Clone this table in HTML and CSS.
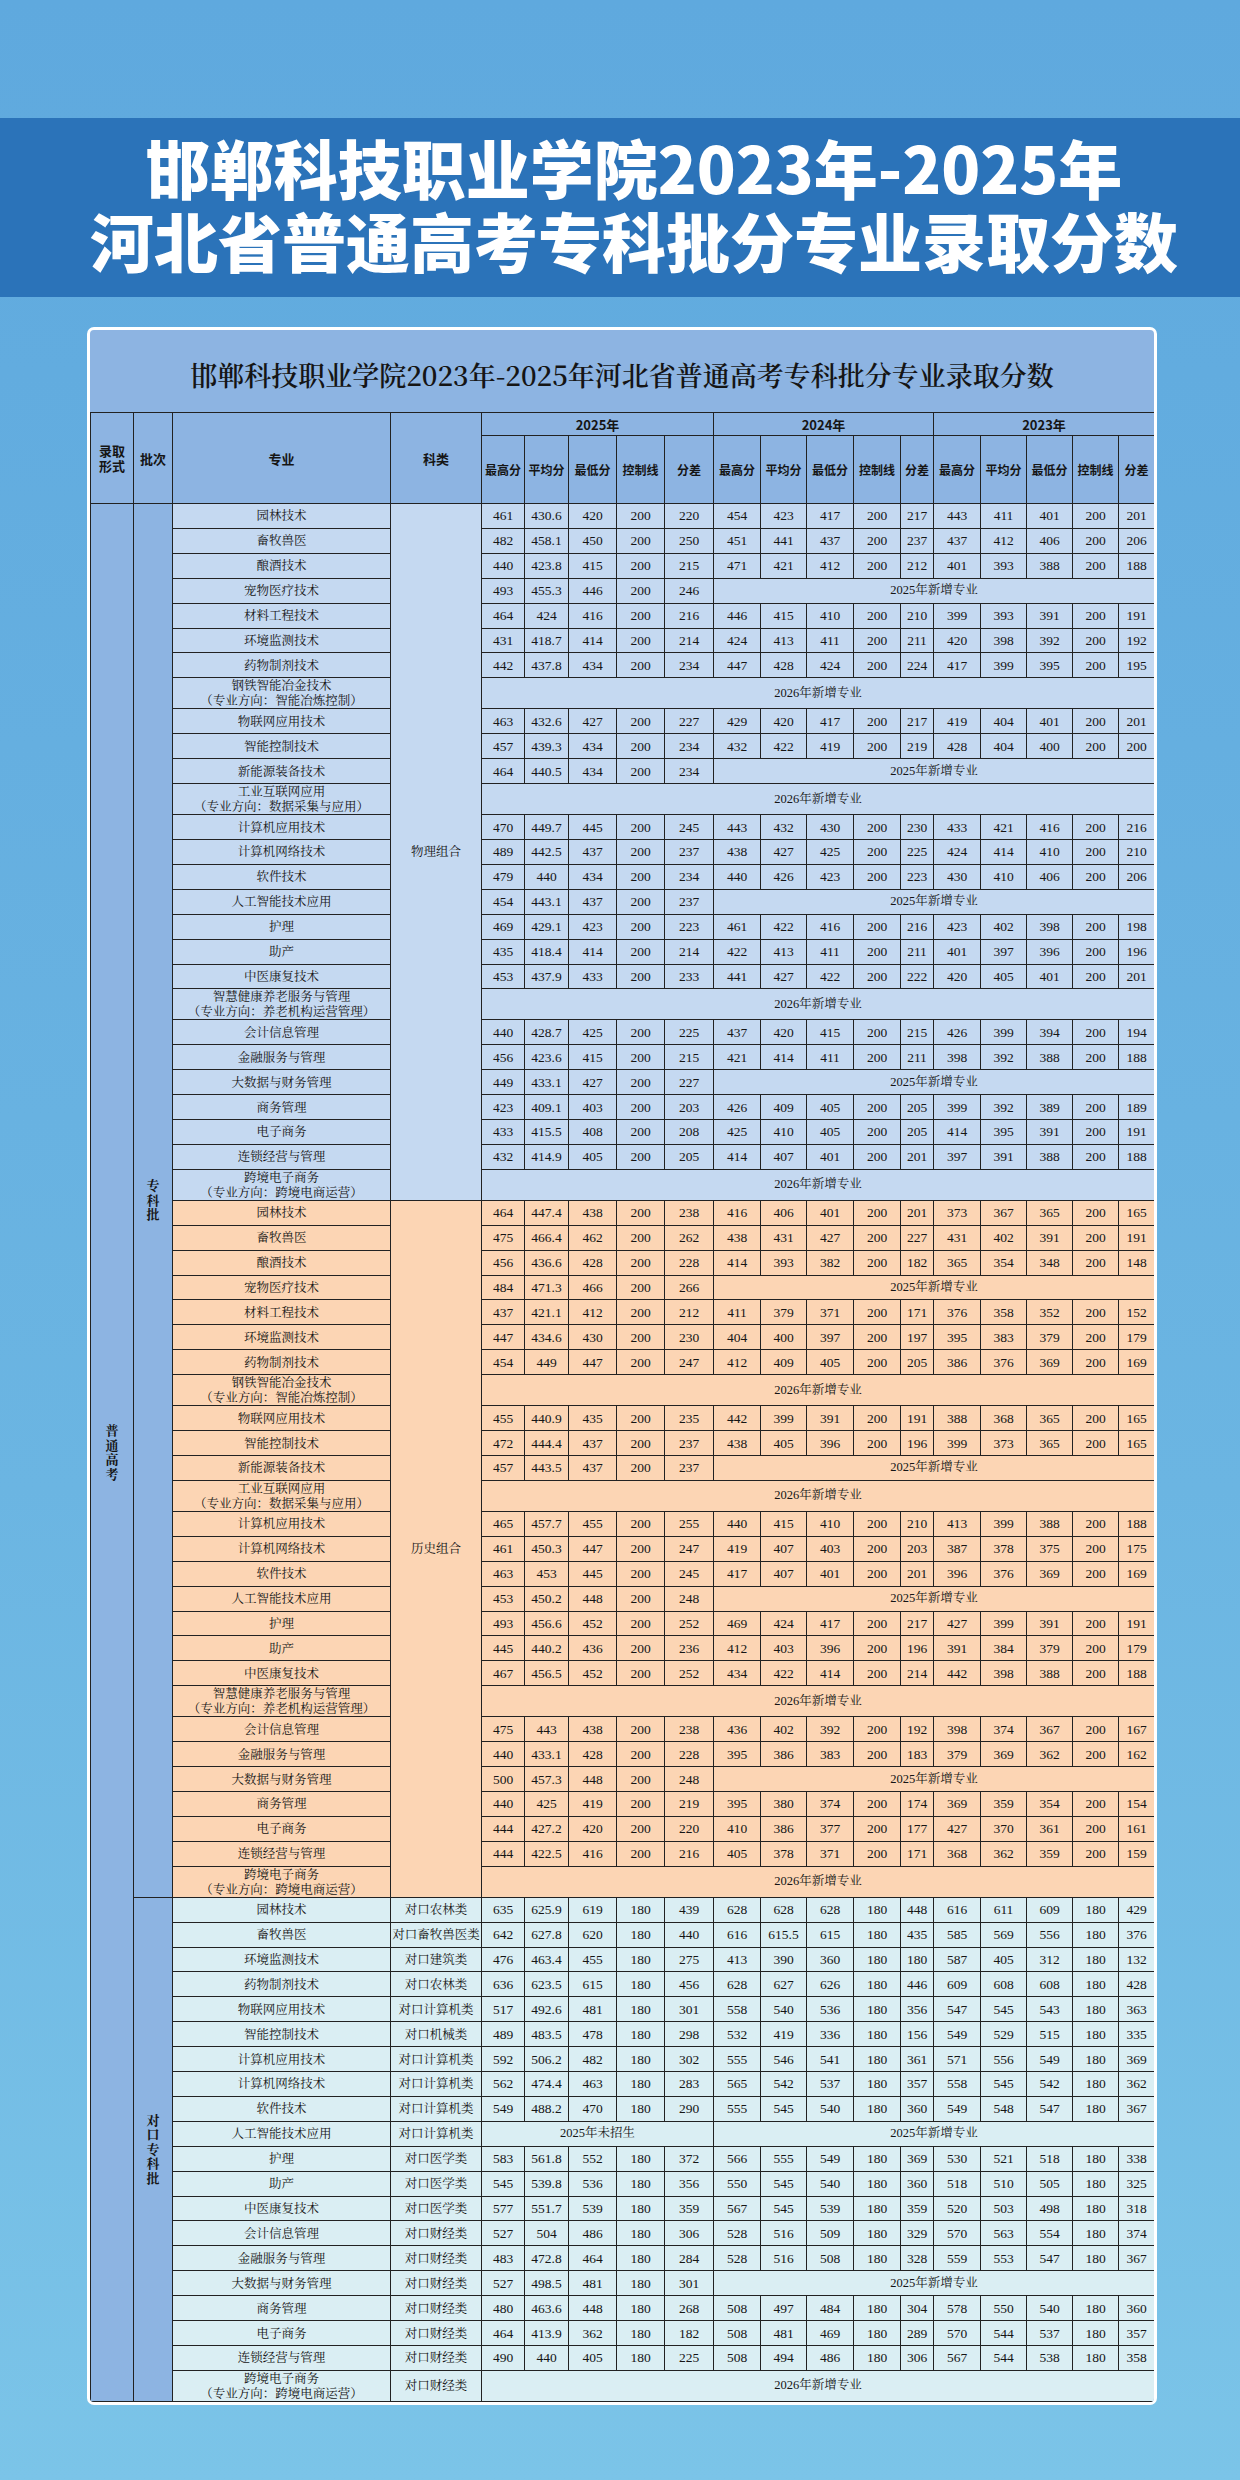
FILE: index.html
```html
<!DOCTYPE html>
<html lang="zh-CN">
<head>
<meta charset="utf-8">
<title>邯郸科技职业学院2023年-2025年河北省普通高考专科批分专业录取分数</title>
<link rel="stylesheet" href="styles.css">
</head>
<body>
<header class="banner">
  <h1><span class="line">邯郸科技职业学院2023年-2025年</span><span class="line">河北省普通高考专科批分专业录取分数</span></h1>
</header>
<main class="card">
  <div class="card-title">邯郸科技职业学院2023年-2025年河北省普通高考专科批分专业录取分数</div>
  <table class="scores">
    <colgroup>
      <col style="width:43px"><col style="width:39px"><col style="width:218px"><col style="width:91px">
      <col style="width:43px"><col style="width:44px"><col style="width:48px"><col style="width:48px"><col style="width:49px">
      <col style="width:47px"><col style="width:46px"><col style="width:47px"><col style="width:47px"><col style="width:33px">
      <col style="width:47px"><col style="width:46px"><col style="width:46px"><col style="width:46px"><col style="width:36px">
    </colgroup>
    <thead>
      <tr class="yr">
        <th rowspan="2">录取<br>形式</th>
        <th rowspan="2">批次</th>
        <th rowspan="2">专业</th>
        <th rowspan="2">科类</th>
        <th colspan="5">2025年</th>
        <th colspan="5">2024年</th>
        <th colspan="5">2023年</th>
      </tr>
      <tr class="sub">
        <th>最高分</th><th>平均分</th><th>最低分</th><th>控制线</th><th>分差</th>
        <th>最高分</th><th>平均分</th><th>最低分</th><th>控制线</th><th>分差</th>
        <th>最高分</th><th>平均分</th><th>最低分</th><th>控制线</th><th>分差</th>
      </tr>
    </thead>
    <tbody>
      <tr class="p">
        <td class="side" rowspan="74"><span class="vert">普通高考</span></td>
        <td class="side" rowspan="54"><span class="vert">专科批</span></td>
        <td class="major">园林技术</td>
        <td class="cat" rowspan="27">物理组合</td>
        <td>461</td><td>430.6</td><td>420</td><td>200</td><td>220</td><td>454</td><td>423</td><td>417</td><td>200</td><td>217</td><td>443</td><td>411</td><td>401</td><td>200</td><td>201</td>
      </tr>
      <tr class="p"><td class="major">畜牧兽医</td><td>482</td><td>458.1</td><td>450</td><td>200</td><td>250</td><td>451</td><td>441</td><td>437</td><td>200</td><td>237</td><td>437</td><td>412</td><td>406</td><td>200</td><td>206</td></tr>
      <tr class="p"><td class="major">酿酒技术</td><td>440</td><td>423.8</td><td>415</td><td>200</td><td>215</td><td>471</td><td>421</td><td>412</td><td>200</td><td>212</td><td>401</td><td>393</td><td>388</td><td>200</td><td>188</td></tr>
      <tr class="p"><td class="major">宠物医疗技术</td><td>493</td><td>455.3</td><td>446</td><td>200</td><td>246</td><td class="note" colspan="10">2025年新增专业</td></tr>
      <tr class="p"><td class="major">材料工程技术</td><td>464</td><td>424</td><td>416</td><td>200</td><td>216</td><td>446</td><td>415</td><td>410</td><td>200</td><td>210</td><td>399</td><td>393</td><td>391</td><td>200</td><td>191</td></tr>
      <tr class="p"><td class="major">环境监测技术</td><td>431</td><td>418.7</td><td>414</td><td>200</td><td>214</td><td>424</td><td>413</td><td>411</td><td>200</td><td>211</td><td>420</td><td>398</td><td>392</td><td>200</td><td>192</td></tr>
      <tr class="p"><td class="major">药物制剂技术</td><td>442</td><td>437.8</td><td>434</td><td>200</td><td>234</td><td>447</td><td>428</td><td>424</td><td>200</td><td>224</td><td>417</td><td>399</td><td>395</td><td>200</td><td>195</td></tr>
      <tr class="p tall"><td class="major">钢铁智能冶金技术<br>（专业方向：智能冶炼控制）</td><td class="note" colspan="15">2026年新增专业</td></tr>
      <tr class="p"><td class="major">物联网应用技术</td><td>463</td><td>432.6</td><td>427</td><td>200</td><td>227</td><td>429</td><td>420</td><td>417</td><td>200</td><td>217</td><td>419</td><td>404</td><td>401</td><td>200</td><td>201</td></tr>
      <tr class="p"><td class="major">智能控制技术</td><td>457</td><td>439.3</td><td>434</td><td>200</td><td>234</td><td>432</td><td>422</td><td>419</td><td>200</td><td>219</td><td>428</td><td>404</td><td>400</td><td>200</td><td>200</td></tr>
      <tr class="p"><td class="major">新能源装备技术</td><td>464</td><td>440.5</td><td>434</td><td>200</td><td>234</td><td class="note" colspan="10">2025年新增专业</td></tr>
      <tr class="p tall"><td class="major">工业互联网应用<br>（专业方向：数据采集与应用）</td><td class="note" colspan="15">2026年新增专业</td></tr>
      <tr class="p"><td class="major">计算机应用技术</td><td>470</td><td>449.7</td><td>445</td><td>200</td><td>245</td><td>443</td><td>432</td><td>430</td><td>200</td><td>230</td><td>433</td><td>421</td><td>416</td><td>200</td><td>216</td></tr>
      <tr class="p"><td class="major">计算机网络技术</td><td>489</td><td>442.5</td><td>437</td><td>200</td><td>237</td><td>438</td><td>427</td><td>425</td><td>200</td><td>225</td><td>424</td><td>414</td><td>410</td><td>200</td><td>210</td></tr>
      <tr class="p"><td class="major">软件技术</td><td>479</td><td>440</td><td>434</td><td>200</td><td>234</td><td>440</td><td>426</td><td>423</td><td>200</td><td>223</td><td>430</td><td>410</td><td>406</td><td>200</td><td>206</td></tr>
      <tr class="p"><td class="major">人工智能技术应用</td><td>454</td><td>443.1</td><td>437</td><td>200</td><td>237</td><td class="note" colspan="10">2025年新增专业</td></tr>
      <tr class="p"><td class="major">护理</td><td>469</td><td>429.1</td><td>423</td><td>200</td><td>223</td><td>461</td><td>422</td><td>416</td><td>200</td><td>216</td><td>423</td><td>402</td><td>398</td><td>200</td><td>198</td></tr>
      <tr class="p"><td class="major">助产</td><td>435</td><td>418.4</td><td>414</td><td>200</td><td>214</td><td>422</td><td>413</td><td>411</td><td>200</td><td>211</td><td>401</td><td>397</td><td>396</td><td>200</td><td>196</td></tr>
      <tr class="p"><td class="major">中医康复技术</td><td>453</td><td>437.9</td><td>433</td><td>200</td><td>233</td><td>441</td><td>427</td><td>422</td><td>200</td><td>222</td><td>420</td><td>405</td><td>401</td><td>200</td><td>201</td></tr>
      <tr class="p tall"><td class="major">智慧健康养老服务与管理<br>（专业方向：养老机构运营管理）</td><td class="note" colspan="15">2026年新增专业</td></tr>
      <tr class="p"><td class="major">会计信息管理</td><td>440</td><td>428.7</td><td>425</td><td>200</td><td>225</td><td>437</td><td>420</td><td>415</td><td>200</td><td>215</td><td>426</td><td>399</td><td>394</td><td>200</td><td>194</td></tr>
      <tr class="p"><td class="major">金融服务与管理</td><td>456</td><td>423.6</td><td>415</td><td>200</td><td>215</td><td>421</td><td>414</td><td>411</td><td>200</td><td>211</td><td>398</td><td>392</td><td>388</td><td>200</td><td>188</td></tr>
      <tr class="p"><td class="major">大数据与财务管理</td><td>449</td><td>433.1</td><td>427</td><td>200</td><td>227</td><td class="note" colspan="10">2025年新增专业</td></tr>
      <tr class="p"><td class="major">商务管理</td><td>423</td><td>409.1</td><td>403</td><td>200</td><td>203</td><td>426</td><td>409</td><td>405</td><td>200</td><td>205</td><td>399</td><td>392</td><td>389</td><td>200</td><td>189</td></tr>
      <tr class="p"><td class="major">电子商务</td><td>433</td><td>415.5</td><td>408</td><td>200</td><td>208</td><td>425</td><td>410</td><td>405</td><td>200</td><td>205</td><td>414</td><td>395</td><td>391</td><td>200</td><td>191</td></tr>
      <tr class="p"><td class="major">连锁经营与管理</td><td>432</td><td>414.9</td><td>405</td><td>200</td><td>205</td><td>414</td><td>407</td><td>401</td><td>200</td><td>201</td><td>397</td><td>391</td><td>388</td><td>200</td><td>188</td></tr>
      <tr class="p tall"><td class="major">跨境电子商务<br>（专业方向：跨境电商运营）</td><td class="note" colspan="15">2026年新增专业</td></tr>

      <tr class="h">
        <td class="major">园林技术</td>
        <td class="cat" rowspan="27">历史组合</td>
        <td>464</td><td>447.4</td><td>438</td><td>200</td><td>238</td><td>416</td><td>406</td><td>401</td><td>200</td><td>201</td><td>373</td><td>367</td><td>365</td><td>200</td><td>165</td>
      </tr>
      <tr class="h"><td class="major">畜牧兽医</td><td>475</td><td>466.4</td><td>462</td><td>200</td><td>262</td><td>438</td><td>431</td><td>427</td><td>200</td><td>227</td><td>431</td><td>402</td><td>391</td><td>200</td><td>191</td></tr>
      <tr class="h"><td class="major">酿酒技术</td><td>456</td><td>436.6</td><td>428</td><td>200</td><td>228</td><td>414</td><td>393</td><td>382</td><td>200</td><td>182</td><td>365</td><td>354</td><td>348</td><td>200</td><td>148</td></tr>
      <tr class="h"><td class="major">宠物医疗技术</td><td>484</td><td>471.3</td><td>466</td><td>200</td><td>266</td><td class="note" colspan="10">2025年新增专业</td></tr>
      <tr class="h"><td class="major">材料工程技术</td><td>437</td><td>421.1</td><td>412</td><td>200</td><td>212</td><td>411</td><td>379</td><td>371</td><td>200</td><td>171</td><td>376</td><td>358</td><td>352</td><td>200</td><td>152</td></tr>
      <tr class="h"><td class="major">环境监测技术</td><td>447</td><td>434.6</td><td>430</td><td>200</td><td>230</td><td>404</td><td>400</td><td>397</td><td>200</td><td>197</td><td>395</td><td>383</td><td>379</td><td>200</td><td>179</td></tr>
      <tr class="h"><td class="major">药物制剂技术</td><td>454</td><td>449</td><td>447</td><td>200</td><td>247</td><td>412</td><td>409</td><td>405</td><td>200</td><td>205</td><td>386</td><td>376</td><td>369</td><td>200</td><td>169</td></tr>
      <tr class="h tall"><td class="major">钢铁智能冶金技术<br>（专业方向：智能冶炼控制）</td><td class="note" colspan="15">2026年新增专业</td></tr>
      <tr class="h"><td class="major">物联网应用技术</td><td>455</td><td>440.9</td><td>435</td><td>200</td><td>235</td><td>442</td><td>399</td><td>391</td><td>200</td><td>191</td><td>388</td><td>368</td><td>365</td><td>200</td><td>165</td></tr>
      <tr class="h"><td class="major">智能控制技术</td><td>472</td><td>444.4</td><td>437</td><td>200</td><td>237</td><td>438</td><td>405</td><td>396</td><td>200</td><td>196</td><td>399</td><td>373</td><td>365</td><td>200</td><td>165</td></tr>
      <tr class="h"><td class="major">新能源装备技术</td><td>457</td><td>443.5</td><td>437</td><td>200</td><td>237</td><td class="note" colspan="10">2025年新增专业</td></tr>
      <tr class="h tall"><td class="major">工业互联网应用<br>（专业方向：数据采集与应用）</td><td class="note" colspan="15">2026年新增专业</td></tr>
      <tr class="h"><td class="major">计算机应用技术</td><td>465</td><td>457.7</td><td>455</td><td>200</td><td>255</td><td>440</td><td>415</td><td>410</td><td>200</td><td>210</td><td>413</td><td>399</td><td>388</td><td>200</td><td>188</td></tr>
      <tr class="h"><td class="major">计算机网络技术</td><td>461</td><td>450.3</td><td>447</td><td>200</td><td>247</td><td>419</td><td>407</td><td>403</td><td>200</td><td>203</td><td>387</td><td>378</td><td>375</td><td>200</td><td>175</td></tr>
      <tr class="h"><td class="major">软件技术</td><td>463</td><td>453</td><td>445</td><td>200</td><td>245</td><td>417</td><td>407</td><td>401</td><td>200</td><td>201</td><td>396</td><td>376</td><td>369</td><td>200</td><td>169</td></tr>
      <tr class="h"><td class="major">人工智能技术应用</td><td>453</td><td>450.2</td><td>448</td><td>200</td><td>248</td><td class="note" colspan="10">2025年新增专业</td></tr>
      <tr class="h"><td class="major">护理</td><td>493</td><td>456.6</td><td>452</td><td>200</td><td>252</td><td>469</td><td>424</td><td>417</td><td>200</td><td>217</td><td>427</td><td>399</td><td>391</td><td>200</td><td>191</td></tr>
      <tr class="h"><td class="major">助产</td><td>445</td><td>440.2</td><td>436</td><td>200</td><td>236</td><td>412</td><td>403</td><td>396</td><td>200</td><td>196</td><td>391</td><td>384</td><td>379</td><td>200</td><td>179</td></tr>
      <tr class="h"><td class="major">中医康复技术</td><td>467</td><td>456.5</td><td>452</td><td>200</td><td>252</td><td>434</td><td>422</td><td>414</td><td>200</td><td>214</td><td>442</td><td>398</td><td>388</td><td>200</td><td>188</td></tr>
      <tr class="h tall"><td class="major">智慧健康养老服务与管理<br>（专业方向：养老机构运营管理）</td><td class="note" colspan="15">2026年新增专业</td></tr>
      <tr class="h"><td class="major">会计信息管理</td><td>475</td><td>443</td><td>438</td><td>200</td><td>238</td><td>436</td><td>402</td><td>392</td><td>200</td><td>192</td><td>398</td><td>374</td><td>367</td><td>200</td><td>167</td></tr>
      <tr class="h"><td class="major">金融服务与管理</td><td>440</td><td>433.1</td><td>428</td><td>200</td><td>228</td><td>395</td><td>386</td><td>383</td><td>200</td><td>183</td><td>379</td><td>369</td><td>362</td><td>200</td><td>162</td></tr>
      <tr class="h"><td class="major">大数据与财务管理</td><td>500</td><td>457.3</td><td>448</td><td>200</td><td>248</td><td class="note" colspan="10">2025年新增专业</td></tr>
      <tr class="h"><td class="major">商务管理</td><td>440</td><td>425</td><td>419</td><td>200</td><td>219</td><td>395</td><td>380</td><td>374</td><td>200</td><td>174</td><td>369</td><td>359</td><td>354</td><td>200</td><td>154</td></tr>
      <tr class="h"><td class="major">电子商务</td><td>444</td><td>427.2</td><td>420</td><td>200</td><td>220</td><td>410</td><td>386</td><td>377</td><td>200</td><td>177</td><td>427</td><td>370</td><td>361</td><td>200</td><td>161</td></tr>
      <tr class="h"><td class="major">连锁经营与管理</td><td>444</td><td>422.5</td><td>416</td><td>200</td><td>216</td><td>405</td><td>378</td><td>371</td><td>200</td><td>171</td><td>368</td><td>362</td><td>359</td><td>200</td><td>159</td></tr>
      <tr class="h tall"><td class="major">跨境电子商务<br>（专业方向：跨境电商运营）</td><td class="note" colspan="15">2026年新增专业</td></tr>

      <tr class="v">
        <td class="side" rowspan="20"><span class="vert">对口专科批</span></td>
        <td class="major">园林技术</td><td class="cat">对口农林类</td>
        <td>635</td><td>625.9</td><td>619</td><td>180</td><td>439</td><td>628</td><td>628</td><td>628</td><td>180</td><td>448</td><td>616</td><td>611</td><td>609</td><td>180</td><td>429</td>
      </tr>
      <tr class="v"><td class="major">畜牧兽医</td><td class="cat">对口畜牧兽医类</td><td>642</td><td>627.8</td><td>620</td><td>180</td><td>440</td><td>616</td><td>615.5</td><td>615</td><td>180</td><td>435</td><td>585</td><td>569</td><td>556</td><td>180</td><td>376</td></tr>
      <tr class="v"><td class="major">环境监测技术</td><td class="cat">对口建筑类</td><td>476</td><td>463.4</td><td>455</td><td>180</td><td>275</td><td>413</td><td>390</td><td>360</td><td>180</td><td>180</td><td>587</td><td>405</td><td>312</td><td>180</td><td>132</td></tr>
      <tr class="v"><td class="major">药物制剂技术</td><td class="cat">对口农林类</td><td>636</td><td>623.5</td><td>615</td><td>180</td><td>456</td><td>628</td><td>627</td><td>626</td><td>180</td><td>446</td><td>609</td><td>608</td><td>608</td><td>180</td><td>428</td></tr>
      <tr class="v"><td class="major">物联网应用技术</td><td class="cat">对口计算机类</td><td>517</td><td>492.6</td><td>481</td><td>180</td><td>301</td><td>558</td><td>540</td><td>536</td><td>180</td><td>356</td><td>547</td><td>545</td><td>543</td><td>180</td><td>363</td></tr>
      <tr class="v"><td class="major">智能控制技术</td><td class="cat">对口机械类</td><td>489</td><td>483.5</td><td>478</td><td>180</td><td>298</td><td>532</td><td>419</td><td>336</td><td>180</td><td>156</td><td>549</td><td>529</td><td>515</td><td>180</td><td>335</td></tr>
      <tr class="v"><td class="major">计算机应用技术</td><td class="cat">对口计算机类</td><td>592</td><td>506.2</td><td>482</td><td>180</td><td>302</td><td>555</td><td>546</td><td>541</td><td>180</td><td>361</td><td>571</td><td>556</td><td>549</td><td>180</td><td>369</td></tr>
      <tr class="v"><td class="major">计算机网络技术</td><td class="cat">对口计算机类</td><td>562</td><td>474.4</td><td>463</td><td>180</td><td>283</td><td>565</td><td>542</td><td>537</td><td>180</td><td>357</td><td>558</td><td>545</td><td>542</td><td>180</td><td>362</td></tr>
      <tr class="v"><td class="major">软件技术</td><td class="cat">对口计算机类</td><td>549</td><td>488.2</td><td>470</td><td>180</td><td>290</td><td>555</td><td>545</td><td>540</td><td>180</td><td>360</td><td>549</td><td>548</td><td>547</td><td>180</td><td>367</td></tr>
      <tr class="v"><td class="major">人工智能技术应用</td><td class="cat">对口计算机类</td><td class="note" colspan="5">2025年未招生</td><td class="note" colspan="10">2025年新增专业</td></tr>
      <tr class="v"><td class="major">护理</td><td class="cat">对口医学类</td><td>583</td><td>561.8</td><td>552</td><td>180</td><td>372</td><td>566</td><td>555</td><td>549</td><td>180</td><td>369</td><td>530</td><td>521</td><td>518</td><td>180</td><td>338</td></tr>
      <tr class="v"><td class="major">助产</td><td class="cat">对口医学类</td><td>545</td><td>539.8</td><td>536</td><td>180</td><td>356</td><td>550</td><td>545</td><td>540</td><td>180</td><td>360</td><td>518</td><td>510</td><td>505</td><td>180</td><td>325</td></tr>
      <tr class="v"><td class="major">中医康复技术</td><td class="cat">对口医学类</td><td>577</td><td>551.7</td><td>539</td><td>180</td><td>359</td><td>567</td><td>545</td><td>539</td><td>180</td><td>359</td><td>520</td><td>503</td><td>498</td><td>180</td><td>318</td></tr>
      <tr class="v"><td class="major">会计信息管理</td><td class="cat">对口财经类</td><td>527</td><td>504</td><td>486</td><td>180</td><td>306</td><td>528</td><td>516</td><td>509</td><td>180</td><td>329</td><td>570</td><td>563</td><td>554</td><td>180</td><td>374</td></tr>
      <tr class="v"><td class="major">金融服务与管理</td><td class="cat">对口财经类</td><td>483</td><td>472.8</td><td>464</td><td>180</td><td>284</td><td>528</td><td>516</td><td>508</td><td>180</td><td>328</td><td>559</td><td>553</td><td>547</td><td>180</td><td>367</td></tr>
      <tr class="v"><td class="major">大数据与财务管理</td><td class="cat">对口财经类</td><td>527</td><td>498.5</td><td>481</td><td>180</td><td>301</td><td class="note" colspan="10">2025年新增专业</td></tr>
      <tr class="v"><td class="major">商务管理</td><td class="cat">对口财经类</td><td>480</td><td>463.6</td><td>448</td><td>180</td><td>268</td><td>508</td><td>497</td><td>484</td><td>180</td><td>304</td><td>578</td><td>550</td><td>540</td><td>180</td><td>360</td></tr>
      <tr class="v"><td class="major">电子商务</td><td class="cat">对口财经类</td><td>464</td><td>413.9</td><td>362</td><td>180</td><td>182</td><td>508</td><td>481</td><td>469</td><td>180</td><td>289</td><td>570</td><td>544</td><td>537</td><td>180</td><td>357</td></tr>
      <tr class="v"><td class="major">连锁经营与管理</td><td class="cat">对口财经类</td><td>490</td><td>440</td><td>405</td><td>180</td><td>225</td><td>508</td><td>494</td><td>486</td><td>180</td><td>306</td><td>567</td><td>544</td><td>538</td><td>180</td><td>358</td></tr>
      <tr class="v tall"><td class="major">跨境电子商务<br>（专业方向：跨境电商运营）</td><td class="cat">对口财经类</td><td class="note" colspan="15">2026年新增专业</td></tr>
    </tbody>
  </table>
</main>
</body>
</html>
```

FILE: styles.css
```css
* { box-sizing: border-box; }

html, body { margin: 0; }

body {
  width: 1240px;
  height: 2480px;
  padding-top: 118px;
  overflow: hidden;
  background: linear-gradient(180deg, #5fa9de 0%, #6bb5e2 60%, #7bc4e8 100%);
  font-family: "Noto Sans CJK SC", "Liberation Sans", sans-serif;
  color: #111;
}

.banner {
  height: 179px;
  background: #2b73b9;
  display: flex;
  align-items: center;
  justify-content: center;
  padding: 0 0 10px 28px;
}

.banner h1 {
  margin: 0;
  color: #fff;
  font-family: "Noto Sans CJK SC", sans-serif;
  font-size: 64px;
  font-weight: 900;
  text-align: center;
  display: flex;
  flex-direction: column;
  align-items: center;
}

.banner .line {
  display: block;
  height: 73px;
  line-height: 73px;
  white-space: nowrap;
}

.card {
  margin: 30px 0 0 87px;
  width: 1070px;
  border: 3px solid #fff;
  border-radius: 7px;
  background: #8db4e2;
  overflow: hidden;
}

.card-title {
  height: 82px;
  display: flex;
  align-items: center;
  justify-content: center;
  padding-top: 6px;
  font-family: "Noto Serif CJK SC", "Noto Sans CJK SC", serif;
  font-size: 27px;
  font-weight: 600;
  color: #151515;
}

.scores {
  width: 1064px;
  table-layout: fixed;
  border-collapse: collapse;
  color: #151515;
}

.scores th,
.scores td {
  border: 1.5px solid #222;
  padding: 0;
  text-align: center;
  vertical-align: middle;
  white-space: nowrap;
  overflow: hidden;
  line-height: 15px;
}

.scores thead th {
  background: #8db4e2;
  font-family: "Noto Sans CJK SC", sans-serif;
  font-weight: 700;
  font-size: 13px;
}

.scores tr.yr { height: 23px; }
.scores tr.sub { height: 68px; }
.scores tr.sub th { font-size: 12px; }

.scores tbody td {
  font-family: "Liberation Serif", "Noto Serif CJK SC", "Noto Sans CJK SC", serif;
  font-size: 13.5px;
}

.scores tbody tr { height: 24.92px; }
.scores tbody tr.tall { height: 30.8px; }

.scores tr.p td { background: #c5d9f1; }
.scores tr.h td { background: #fcd5b4; }
.scores tr.v td { background: #daeef3; }
.scores tbody td.side { background: #8db4e2; }

.scores td.major,
.scores td.cat,
.scores td.note {
  font-size: 12.5px;
}

.scores td.major,
.scores td.cat {
  font-family: "Noto Serif CJK SC", "Noto Sans CJK SC", serif;
}

.vert {
  display: inline-block;
  width: 13px;
  white-space: normal;
  font-family: "Noto Serif CJK SC", "Noto Sans CJK SC", serif;
  font-size: 13px;
  font-weight: 700;
  line-height: 14.5px;
}
```
